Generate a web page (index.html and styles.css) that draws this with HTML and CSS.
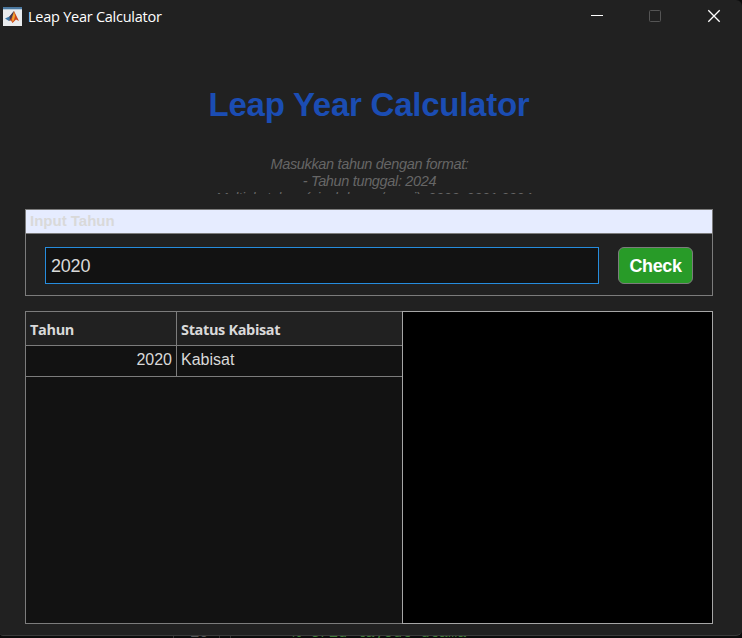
FILE: index.html
```html
<!DOCTYPE html>
<html lang="id">
<head>
<meta charset="utf-8">
<title>Leap Year Calculator</title>
<link rel="stylesheet" href="styles.css">
</head>
<body>
<div class="editor"><span class="gutter">10</span><span class="fold"></span><span class="code">% Grid layout utama</span></div>
<main class="window">
  <header class="titlebar">
    <svg class="app-icon" width="19" height="19" viewBox="0 0 19 19">
      <rect width="19" height="19" fill="#e9ebed"/>
      <rect width="19" height="2" fill="#4b789f"/>
      <rect y="2" width="19" height="1" fill="#b6cadb"/>
      <path d="M2 11.5 6.5 9.5 11 4 8.5 13 6 14Z" fill="#3c78a8"/>
      <path d="M6 13.5 9 10 11 4 12.5 7 16 14 13 12.5 9.5 16 8 13.5Z" fill="#c9461d"/>
      <path d="M9 12 11 4 12 9 11 13 9.5 15Z" fill="#f3a12b"/>
      <path d="M6.5 9.5 11 4 8.5 11 7 13Z" fill="#4c3546"/>
    </svg>
    <span class="caption">Leap Year Calculator</span>
    <svg class="controls" width="130" height="14" viewBox="0 0 130 14" fill="none">
      <path d="M0 6.5H12" stroke="#fff"/>
      <rect x="58.5" y="1.5" width="11" height="11" rx="1" stroke="#555"/>
      <path d="M117.3 1.3 128.7 12.7M128.7 1.3 117.3 12.7" stroke="#fff" stroke-width="1.3"/>
    </svg>
  </header>
  <h1>Leap Year Calculator</h1>
  <div class="hint">
    <div>Masukkan tahun dengan format:</div>
    <div>- Tahun tunggal: 2024</div>
    <div>- Multiple tahun (pisah koma/spasi): 2020, 2021 2024</div>
  </div>
  <section class="panel">
    <h2>Input Tahun</h2>
    <form class="form"><div class="field">2020</div><button type="button">Check</button></form>
  </section>
  <section class="table">
    <div class="head"><span>Tahun</span><span>Status Kabisat</span></div>
    <div class="row"><span>2020</span><span>Kabisat</span></div>
    <div class="blank"></div>
  </section>
</main>
</body>
</html>
```
FILE: styles.css
```css
* { box-sizing: border-box; }
body { margin: 0; width: 742px; height: 638px; overflow: hidden; background: #0c0c0c; font-family: "Liberation Sans", sans-serif; color: #d9d9d9; position: relative; }
.window { position: relative; height: 636px; background: #212121; border-bottom: 1px solid #3b3b3b; border-radius: 0 6px 6px 3px; padding: 0 29px 0 25px; display: flex; flex-direction: column; }
.titlebar { height: 34px; margin: 0 -29px 0 -25px; padding-left: 3px; display: flex; align-items: center; flex: none; }
.app-icon { margin-top: -2px; }
.caption { margin-left: 6px; font: 14.5px/20px "Open Sans", sans-serif; color: #fff; white-space: nowrap; letter-spacing: -.25px; }
.controls { margin-left: auto; margin-right: 21px; margin-top: -2px; }
h1 { margin: 51px 0 0; height: 40px; font-size: 33px; line-height: 40px; text-align: center; color: #1b4db3; white-space: nowrap; letter-spacing: -.25px; }
.hint { margin-top: 31px; height: 38px; overflow: hidden; font: italic 14.5px/17px "Liberation Sans", sans-serif; letter-spacing: -.34px; text-align: center; color: #666; white-space: nowrap; flex: none; padding-left: 1px; }
.panel { margin-top: 15px; height: 87px; border: 1px solid #7c7c7c; flex: none; }
h2 { margin: 0; height: 24px; padding-left: 4px; font-size: 15px; line-height: 21px; background: #e6ecff; border-bottom: 1px solid #7c7c7c; }
.form { display: flex; gap: 19px; padding: 13px 19px 0; }
.field { flex: 1; height: 37px; border: 1px solid #268cdd; background: #121212; padding-left: 5px; font-size: 18px; line-height: 36px; letter-spacing: -.2px; }
button { width: 75px; height: 37px; border: 1px solid #7c7c7c; border-radius: 6px; background: #289b28; color: #fff; font: bold 18px/34px "Liberation Sans", sans-serif; padding: 0; letter-spacing: -.4px; }
.table { margin-top: 15px; height: 313px; border: 1px solid #7c7c7c; background: #121212; position: relative; flex: none; }
.head, .row { display: grid; grid-template-columns: 151px 225px; width: 376px; border-bottom: 1px solid #7c7c7c; }
.head { height: 34px; background: #212121; font: bold 14.5px/36px "Open Sans", sans-serif; letter-spacing: -.35px; }
.row { height: 31px; font-size: 16px; line-height: 27px; }
.head span, .row span { padding: 0 4px; }
.head span:first-child, .row span:first-child { border-right: 1px solid #7c7c7c; }
.row span:first-child { text-align: right; }
.blank { position: absolute; inset: -1px -1px -1px 376px; background: #000; border: 1px solid #a6a6a6; }
.editor { position: absolute; left: 173px; top: 624px; display: flex; font: 15.3px/18px "Liberation Mono", monospace; white-space: nowrap; color: #555; }
.gutter { width: 47px; padding-left: 16px; border: solid #333; border-width: 0 1px; }
.fold { width: 11px; border-right: 1px solid #333; }
.code { margin-left: 61px; color: #3d7a36; }
```
